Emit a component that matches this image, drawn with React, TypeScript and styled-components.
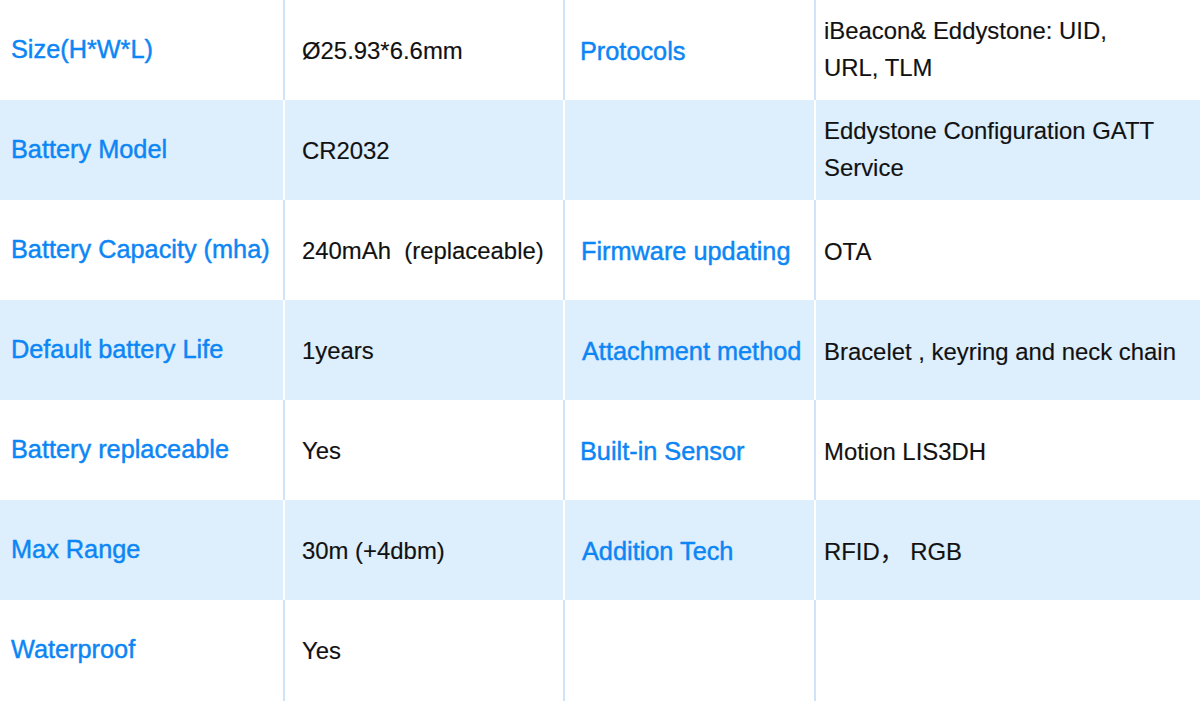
import React from "react";
import styled, { createGlobalStyle } from "styled-components";

const Global = createGlobalStyle`
  html, body { margin: 0; padding: 0; background: #ffffff; }
  body { font-family: "Liberation Sans", Arial, "Noto Sans CJK SC", sans-serif; }
`;

const Table = styled.div`
  width: 1200px;
  height: 701px;
  display: grid;
  grid-template-rows: repeat(6, 100px) 101px;
  background: #ffffff;
  overflow: hidden;
`;

const Row = styled.div<{ $shade: boolean }>`
  display: grid;
  grid-template-columns: 283px 280px 251px 1fr;
  background: ${(p) => (p.$shade ? "#ddeefd" : "#ffffff")};
`;

const Cell = styled.div<{ $shade: boolean; $first?: boolean; $pl: number; $dy: number }>`
  display: flex;
  align-items: center;
  box-sizing: border-box;
  padding-left: ${(p) => p.$pl}px;
  padding-top: ${(p) => (p.$dy > 0 ? p.$dy * 2 : 0)}px;
  padding-bottom: ${(p) => (p.$dy < 0 ? -p.$dy * 2 : 0)}px;
  border-left: ${(p) => (p.$first ? "none" : `2px solid ${p.$shade ? "#ffffff" : "#cfe4f8"}`)};
`;

const Label = styled.span`
  color: #0c86f5;
  font-family: "Liberation Sans", Arial, sans-serif;
  font-size: 25.3px;
  line-height: 37px;
  white-space: pre;
  -webkit-text-stroke: 0.45px #0c86f5;
`;

const Value = styled.span`
  color: #111111;
  font-family: "Liberation Sans", Arial, "Noto Sans CJK SC", sans-serif;
  font-size: 23.9px;
  line-height: 37px;
  white-space: pre-line;
  -webkit-text-stroke: 0.15px #111111;
`;

type RowData = [string, string, string, string];

const rows: RowData[] = [
  ["Size(H*W*L)", "Ø25.93*6.6mm", "Protocols", "iBeacon& Eddystone: UID,\nURL, TLM"],
  ["Battery Model", "CR2032", "", "Eddystone Configuration GATT\nService"],
  ["Battery Capacity (mha)", "240mAh\u00a0\u00a0(replaceable)", "Firmware updating", "OTA"],
  ["Default battery Life", "1years", "Attachment method", "Bracelet , keyring and neck chain"],
  ["Battery replaceable", "Yes", "Built-in Sensor", "Motion LIS3DH"],
  ["Max Range", "30m (+4dbm)", "Addition Tech", "RFID，\u00a0RGB"],
  ["Waterproof", "Yes", "", ""],
];

const offsets: { c3x: number }[] = [
  { c3x: 15 },
  { c3x: 15 },
  { c3x: 16 },
  { c3x: 17 },
  { c3x: 15 },
  { c3x: 17 },
  { c3x: 15 },
];

export default function App() {
  return (
    <>
      <Global />
      <Table>
        {rows.map((r, i) => {
          const shade = i % 2 === 1;
          return (
            <Row key={i} $shade={shade}>
              <Cell $shade={shade} $first $pl={11} $dy={-1}>
                <Label>{r[0]}</Label>
              </Cell>
              <Cell $shade={shade} $pl={17} $dy={0}>
                <Value>{r[1]}</Value>
              </Cell>
              <Cell $shade={shade} $pl={offsets[i].c3x} $dy={1}>
                <Label>{r[2]}</Label>
              </Cell>
              <Cell $shade={shade} $pl={8} $dy={i < 2 ? -1 : 1}>
                <Value>{r[3]}</Value>
              </Cell>
            </Row>
          );
        })}
      </Table>
    </>
  );
}
